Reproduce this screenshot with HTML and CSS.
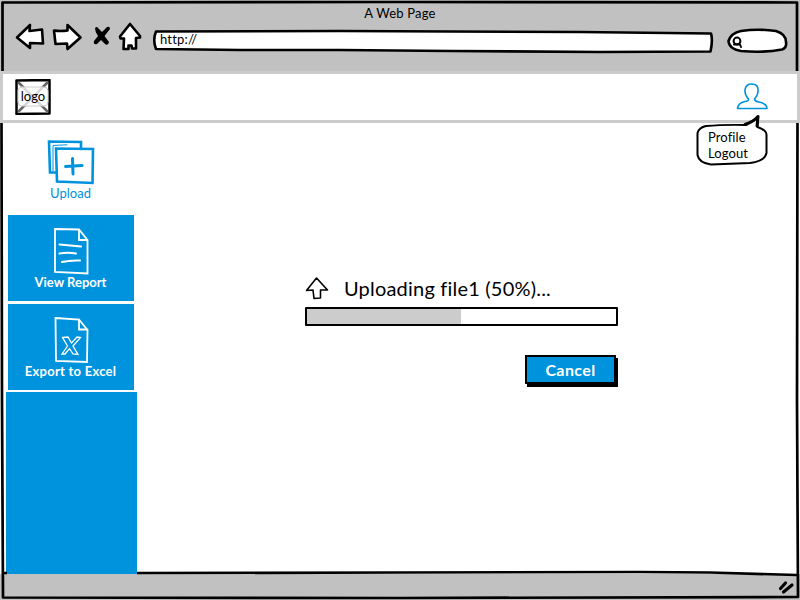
FILE: index.html
```
<!DOCTYPE html>
<html lang="en">
<head>
<meta charset="utf-8">
<title>A Web Page</title>
<link rel="stylesheet" href="styles.css">
</head>
<body>
<div class="window">
  <div class="chrome">
    <div class="title"><span>A Web Page</span></div>
    <div class="toolbar">
      <svg class="ink back" width="32" height="32" viewBox="14 21 32 32"><path d="M17 37.500 30 25 29.500 31 42 29.500 43 43.500 30 43 30 48Z"/></svg>
      <svg class="ink forward" width="34" height="32" viewBox="50 21 34 32"><path d="M54 30.500Q61 31.500 67.500 30.500L67.500 25 80.500 37.500 67.500 49 67 43.500 55.500 44Z"/></svg>
      <svg class="stop" width="20" height="32" viewBox="92 21 20 32"><path d="M95 28Q97 26 98 28L102 32 107 27Q110 26 110 29L104.500 36 109 42Q108 46 105 44L101 40 97 44Q93 45 94 41L98 36Q95 32 95 28Z"/></svg>
      <svg class="ink home" width="26" height="32" viewBox="117 21 26 32"><path d="M130 24 120 36.500 120.500 38.500 124 38.500 123.500 49 128.500 49 128.500 45.500 131.500 45.500 132 48.500 136 48.500 136 38 140 37.500 140 36Z"/></svg>
      <div class="address">
        <svg class="ink" width="562" height="26" viewBox="152 28 562 26"><path d="M156 31.500 340 31 450 31.500 580 32 711 33.500Q713 40 710.500 51.500L600 52 450 51 340 50 240 50 156 49Q152.500 40 156 31.500Z"/></svg>
        <span>http://</span>
      </div>
      <svg class="ink search" width="62" height="32" viewBox="726 25 62 32"><path d="M741 31Q758 28.500 776 31Q786 34 786 42Q787 48 782 49.500Q764 53 741 51Q729 49 728.500 41Q731 33 741 31Z"/><g class="lens"><circle cx="737" cy="41" r="3.400"/><path d="M734 44.500H740L741 47"/></g></svg>
    </div>
  </div>
  <header class="header">
    <div class="logo">
      <svg width="36" height="36" viewBox="15 79 36 36"><path class="logo-frame" d="M16.500 80.500 49.500 80V113.500L16.500 114Z"/><path class="logo-cross" d="M19 83 47 111M47 83 19 111"/><rect class="logo-label" x="18" y="87" width="30" height="19" rx="4"/></svg>
      <span>logo</span>
    </div>
    <svg class="user" width="34" height="30" viewBox="735 81 34 30"><path d="M748.500 99C743 93 744 84 751.500 84Q760 84 757.500 94Q756.500 97 754.500 99Q755 101.500 759 102Q767 103.500 767 108.500H737.500Q738 103 745 101.500Q749 101 748.500 99Z"/></svg>
    <div class="bubble">
      <svg width="74" height="54" viewBox="695 113 74 54"><path d="M706 126Q723 124.500 746 125 755 121.500 758 116.500L757.500 127Q766.500 130 766.500 135V153Q765 161 750 163L711 164.500Q699 163 697.500 155V133Q699 127.500 706 126Z"/><path class="tail" d="M745 124.500Q754 121.500 758 116.500L757 126"/></svg>
      <div class="menu"><a>Profile</a><a>Logout</a></div>
    </div>
  </header>
  <div class="body">
    <nav class="sidebar">
      <a class="tile upload">
        <svg width="48" height="46" viewBox="47 139 48 46"><path d="M56 172.500H50L49 141.500 81 142V149" stroke-width="2.600"/><path d="M53 171V145.500L67 144.800" stroke-width="1"/><path d="M56 148.500 93 149 92.500 183 57 181.500Z" stroke-width="2.600"/><path d="M72.500 158.500 73 174M65.500 166.500 82 165.500" stroke-width="3"/></svg>
        <span>Upload</span>
      </a>
      <a class="tile report">
        <svg width="38" height="48" viewBox="52 227 38 48"><path d="M55 229 79 229.500 87.500 240 87.500 273.500 55 272ZM79 229.500V240H87.500"/><path d="M59.500 244.500 81 246.500M59.500 253.500Q68 252 76 253.500M62 262Q70 260 80 260.500" stroke-width="2"/></svg>
        <span>View Report</span>
      </a>
      <a class="tile export">
        <svg width="38" height="48" viewBox="52 316 38 48"><path d="M55.500 318 79 319.500 87.500 330 87 362 56 361ZM79 319.500V329.500H87.500"/><path d="M62.500 337.500 68 337 71.500 343 77 337 80.500 337.500 73 346 78 354.500 73 354 69.500 348.500 65 354 62 354 67.500 346Z" stroke-width="1.300"/></svg>
        <span>Export to Excel</span>
      </a>
      <div class="filler"></div>
    </nav>
    <main class="content">
      <section class="upload-panel">
        <div class="status">
          <svg width="24" height="24" viewBox="305 276 24 24"><path d="M316.500 278 306.500 290.500 313 290 314 298.500 320.500 298 320.500 290 327.500 290Q322 284 316.500 278Z"/></svg>
          <span>Uploading file1 (50%)...</span>
        </div>
        <div class="progress"><div class="progress-fill" style="width:50%"></div></div>
        <button class="cancel">Cancel</button>
      </section>
    </main>
  </div>
  <footer class="footer">
    <svg width="18" height="18" viewBox="777 578 18 18"><path d="M780.500 588.500 785.500 583M783.500 592 792 585"/></svg>
  </footer>
  <svg class="outline" width="800" height="600" viewBox="0 0 800 600"><path d="M2.500 71V2.500L400 2 797 2.500V71M797.500 123 797 400 798 597 400 598 3 597.500 2 400 1.500 123"/><path d="M3 573H7M137 573 400 572.500 640 572 710 572.500 797 575"/></svg>
</div>
</body>
</html>
```
FILE: styles.css
```
* { box-sizing: border-box; }
body { margin: 0; background: #fff; color: #000; font-family: Lato, "Open Sans", sans-serif; font-variant-ligatures: none; }
svg { display: block; flex: none; fill: none; stroke-linejoin: round; stroke-linecap: round; }
.window { position: relative; display: flex; flex-direction: column; width: 800px; height: 600px; overflow: hidden; }

.chrome { height: 71px; background: #c1c1c1; }
.title { height: 21px; padding-top: 6px; text-align: center; font-size: 13px; line-height: 15px; letter-spacing: .2px; }
.toolbar { display: flex; align-items: flex-start; padding-left: 14px; }
.ink { fill: #fff; stroke: #000; stroke-width: 2.6px; }
.forward { margin-left: 4px; }
.stop { margin-left: 8px; fill: #000; }
.home { margin-left: 5px; }
.address { display: grid; margin: 7px 0 0 9px; }
.address > * { grid-area: 1 / 1; }
.address span { padding: 4px 0 0 8px; font-size: 13px; line-height: 15px; letter-spacing: .2px; }
.search { margin: 4px 0 0 12px; }
.lens { fill: none; stroke-width: 2px; }

.header { position: relative; display: flex; justify-content: space-between; height: 52px; border: 3px solid #ccc; background: #fff; padding: 5px 28px 0 12px; }
.logo { display: grid; width: 36px; height: 36px; }
.logo > * { grid-area: 1 / 1; }
.logo span { font-size: 13px; line-height: 35px; text-align: center; }
.logo-frame { stroke: #000; stroke-width: 2.5px; }
.logo-cross { stroke: #666; stroke-width: 2.5px; }
.logo-label { fill: #fff; fill-opacity: .75; stroke: #ccc; stroke-width: 1px; }
.user { margin-top: 2px; stroke: #0093dd; stroke-width: 1.6px; }
.bubble { position: absolute; z-index: 2; left: 692px; top: 39px; display: grid; }
.bubble > * { grid-area: 1 / 1; }
.bubble path { fill: #fff; stroke: #000; stroke-width: 2px; }
.bubble .tail { stroke-width: 3px; }
.menu { display: flex; flex-direction: column; padding: 16px 0 0 13px; font-size: 13px; line-height: 16px; letter-spacing: .1px; z-index: 1; }

.body { display: flex; height: 451px; }
.sidebar { display: flex; flex-direction: column; width: 131px; margin-left: 6px; color: #fff; font-size: 13px; line-height: 16px; }
.tile { display: flex; flex-direction: column; align-items: center; width: 126px; margin-left: 2px; padding-right: 1px; background: #0093dd; font-weight: 700; }
.tile svg { stroke: currentColor; stroke-width: 1.8px; stroke-linejoin: miter; }
.tile span { margin-top: -1px; }
.upload { height: 89px; margin-bottom: 3px; padding-top: 16px; color: #0093dd; background: #fff; font-weight: 400; }
.upload span { margin-top: 0; }
.report { height: 86px; margin-bottom: 3px; padding-top: 12px; }
.export { height: 86px; margin-bottom: 2px; padding-top: 12px; }
.export span { letter-spacing: .25px; }
.filler { flex: 1; background: #0093dd; }
.content { flex: 1; padding: 152px 0 0 168px; }
.upload-panel { width: 313px; }
.status { display: flex; align-items: center; gap: 15px; height: 26px; font-size: 20px; letter-spacing: .2px; white-space: nowrap; }
.status span { margin-top: -1px; }
.status svg { stroke: #000; stroke-width: 1.6px; }
.progress { height: 19px; margin-top: 6px; border: 2px solid #000; border-width: 2.5px 2px; border-radius: 1px; background: #fff; padding-right: 2px; }
.progress-fill { height: 100%; background: #ccc; }
.cancel { display: block; width: 91px; height: 29px; margin: 29px 2px 0 auto; padding: 0; border: 2px solid #000; background: #0093dd; box-shadow: 2px 3px 0 #000; color: #fff; font: 700 16px/24px Lato, "Open Sans", sans-serif; letter-spacing: .4px; }
.footer { flex: 1; display: flex; justify-content: flex-end; padding: 4px 5px 0 0; background: #c1c1c1; }
.footer svg { stroke: #000; stroke-width: 3.2px; }
.outline { position: absolute; inset: 0; pointer-events: none; stroke: #000; stroke-width: 2.7px; stroke-linecap: butt; }
```
